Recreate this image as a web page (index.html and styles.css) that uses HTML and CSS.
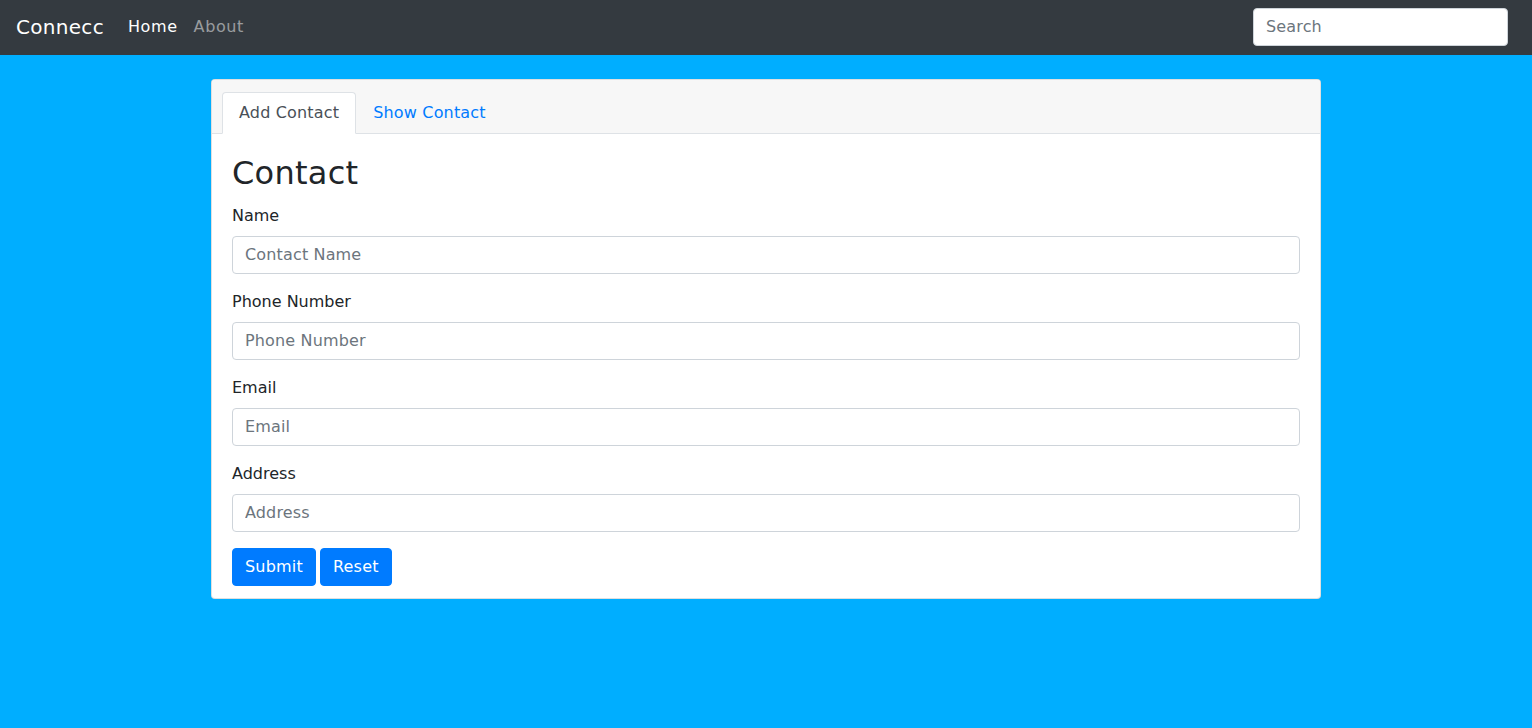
FILE: index.html
```html
<!DOCTYPE html>
<html lang="en">
<head>
    <meta charset="UTF-8">
    <meta name="viewport" content="width=device-width, initial-scale=1.0">
    <title>Connecc</title>
    <link rel="stylesheet" href="styles.css">
</head>
<body>
    <nav class="navbar">
        <a class="brand" href="#">Connecc</a>
        <ul class="nav-links">
            <li><a class="nav-link active" href="#">Home</a></li>
            <li><a class="nav-link" href="#">About</a></li>
        </ul>
        <form class="search-form">
            <input class="form-control search-input" type="search" placeholder="Search">
        </form>
    </nav>

    <div class="container">
        <div class="card">
            <div class="card-header">
                <ul class="tabs">
                    <li><a class="tab active" href="#">Add Contact</a></li>
                    <li><a class="tab" href="#">Show Contact</a></li>
                </ul>
            </div>
            <div class="card-body">
                <h2 class="title">Contact</h2>
                <form>
                    <div class="form-group">
                        <label for="name">Name</label>
                        <input class="form-control" id="name" type="text" placeholder="Contact Name">
                    </div>
                    <div class="form-group">
                        <label for="phone">Phone Number</label>
                        <input class="form-control" id="phone" type="text" placeholder="Phone Number">
                    </div>
                    <div class="form-group">
                        <label for="email">Email</label>
                        <input class="form-control" id="email" type="email" placeholder="Email">
                    </div>
                    <div class="form-group">
                        <label for="address">Address</label>
                        <input class="form-control" id="address" type="text" placeholder="Address">
                    </div>
                    <div class="buttons">
                        <button class="btn" type="submit">Submit</button>
                        <button class="btn" type="reset">Reset</button>
                    </div>
                </form>
            </div>
        </div>
    </div>
</body>
</html>
```

FILE: styles.css
```css
* {
    box-sizing: border-box;
}

body {
    font-family: "DejaVu Sans", sans-serif;
    font-size: 16px;
    line-height: 1.5;
    color: #212529;
    margin: 0;
    padding: 0;
    background-color: #00aeff;
    min-height: 100vh;
}

a {
    text-decoration: none;
}

ul {
    list-style: none;
    margin: 0;
    padding: 0;
}

/* navbar */
.navbar {
    display: flex;
    align-items: center;
    height: 55px;
    padding: 0 16px 2px;
    background-color: #343a40;
}

.brand {
    font-size: 20px;
    color: #fff;
    margin-right: 16px;
    letter-spacing: 0.3px;
}

.nav-links {
    display: flex;
    flex: 1;
}

.nav-link {
    display: block;
    padding: 8px 8px;
    color: rgba(255, 255, 255, 0.5);
    letter-spacing: 0.6px;
}

.nav-link.active {
    color: #fff;
}

.search-form {
    margin-right: 8px;
}

.form-control {
    display: block;
    width: 100%;
    height: 38px;
    padding: 5px 12px 7px;
    font-family: inherit;
    font-size: 16px;
    color: #495057;
    background-color: #fff;
    border: 1px solid #ced4da;
    border-radius: 4px;
    letter-spacing: 0.15px;
}

.form-control::placeholder {
    color: #6c757d;
}

.search-input {
    width: 255px;
    padding: 6px 12px;
}

/* card */
.container {
    width: 1140px;
    margin: 24px auto 0;
    padding: 0 15px;
}

.card {
    background-color: #fff;
    border: 1px solid rgba(0, 0, 0, 0.125);
    border-radius: 4px;
}

.card-header {
    padding: 12px 20px 0;
    background-color: #f7f7f7;
    border-bottom: 1px solid #dee2e6;
    border-radius: 3px 3px 0 0;
}

.tabs {
    display: flex;
    margin: 0 -10px -1px;
}

.tab {
    display: block;
    padding: 8px 16px;
    color: #007bff;
    border: 1px solid transparent;
    border-radius: 4px 4px 0 0;
    letter-spacing: 0.17px;
}

.tab.active {
    color: #495057;
    background-color: #fff;
    border-color: #dee2e6 #dee2e6 #fff;
}

.card-body {
    padding: 20px 20px 12px;
}

.title {
    font-size: 32px;
    font-weight: 400;
    line-height: 1.2;
    margin: 0 0 12px;
    letter-spacing: 0.27px;
}

.form-group {
    margin-bottom: 16px;
}

label {
    display: inline-block;
    margin-bottom: 8px;
}

.buttons {
    display: flex;
    gap: 4px;
}

.btn {
    height: 38px;
    padding: 6px 12px;
    font-family: inherit;
    font-size: 16px;
    line-height: 1.5;
    color: #fff;
    background-color: #007bff;
    border: 1px solid #007bff;
    border-radius: 4px;
    letter-spacing: 0.2px;
    cursor: pointer;
}
```
